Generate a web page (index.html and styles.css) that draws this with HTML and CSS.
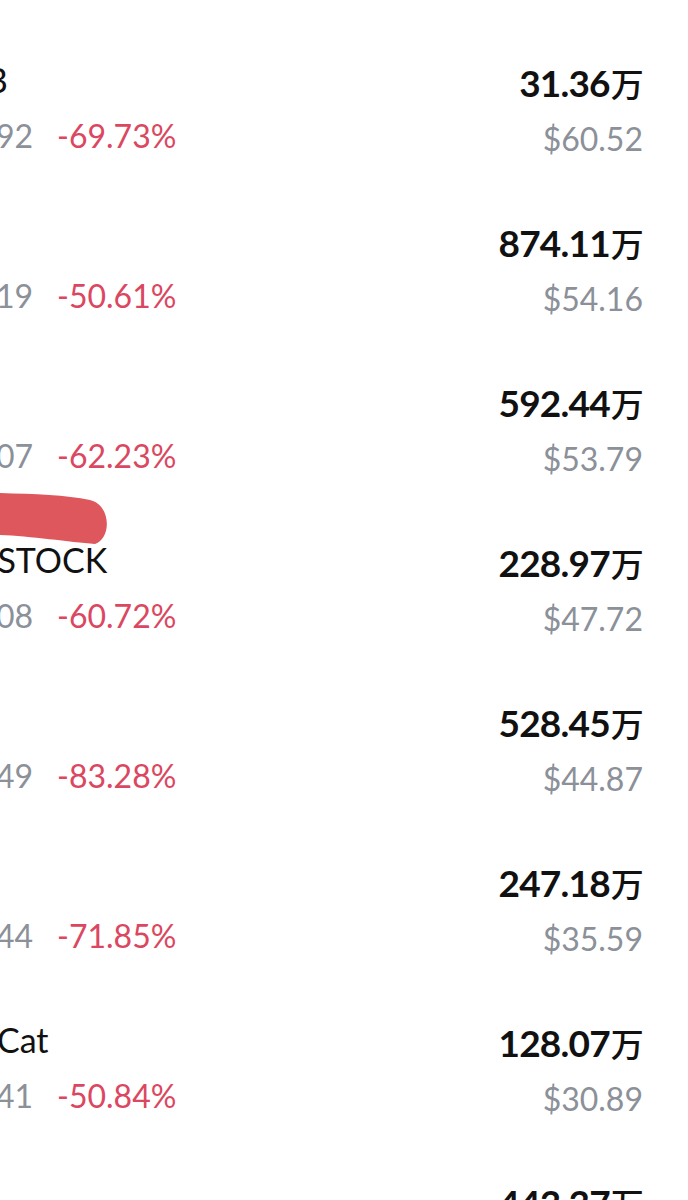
FILE: index.html
```html
<!DOCTYPE html>
<html lang="zh-CN">
<head>
    <meta charset="UTF-8">
    <meta name="viewport" content="width=device-width, initial-scale=1.0">
    <title>Token List</title>
    <link rel="stylesheet" href="styles.css">
</head>
<body>
    <div class="list">
        <div class="row">
            <div class="left">
                <div class="name">MOGUB</div>
                <div class="sub"><span class="price">$0.001992</span><span class="change">-69.73%</span></div>
            </div>
            <div class="right">
                <div class="value">31.36<span class="unit">万</span></div>
                <div class="usd">$60.52</div>
            </div>
        </div>

        <div class="row">
            <div class="left">
                <div class="name">ZEN</div>
                <div class="sub"><span class="price">$0.004519</span><span class="change">-50.61%</span></div>
            </div>
            <div class="right">
                <div class="value">874.11<span class="unit">万</span></div>
                <div class="usd">$54.16</div>
            </div>
        </div>

        <div class="row">
            <div class="left">
                <div class="name">KOI</div>
                <div class="sub"><span class="price">$0.002907</span><span class="change">-62.23%</span></div>
            </div>
            <div class="right">
                <div class="value">592.44<span class="unit">万</span></div>
                <div class="usd">$53.79</div>
            </div>
        </div>

        <div class="row">
            <div class="left">
                <div class="name">WOJAKSTOCK</div>
                <div class="sub"><span class="price">$0.001208</span><span class="change">-60.72%</span></div>
            </div>
            <div class="right">
                <div class="value">228.97<span class="unit">万</span></div>
                <div class="usd">$47.72</div>
            </div>
            <svg class="scribble" width="112" height="70" viewBox="0 0 112 70">
                <path d="M0 13 C35 14 66 15 90 20 C111 25 112 58 95 64 C70 62 30 56 0 55 Z" fill="#dd575c"/>
            </svg>
        </div>

        <div class="row">
            <div class="left">
                <div class="name">MEW</div>
                <div class="sub"><span class="price">$0.003349</span><span class="change">-83.28%</span></div>
            </div>
            <div class="right">
                <div class="value">528.45<span class="unit">万</span></div>
                <div class="usd">$44.87</div>
            </div>
        </div>

        <div class="row">
            <div class="left">
                <div class="name">DOG</div>
                <div class="sub"><span class="price">$0.007144</span><span class="change">-71.85%</span></div>
            </div>
            <div class="right">
                <div class="value">247.18<span class="unit">万</span></div>
                <div class="usd">$35.59</div>
            </div>
        </div>

        <div class="row">
            <div class="left">
                <div class="name">GrumpyCat</div>
                <div class="sub"><span class="price">$0.002241</span><span class="change">-50.84%</span></div>
            </div>
            <div class="right">
                <div class="value">128.07<span class="unit">万</span></div>
                <div class="usd">$30.89</div>
            </div>
        </div>

        <div class="row">
            <div class="left">
                <div class="name">PUPS</div>
                <div class="sub"><span class="price">$0.005512</span><span class="change">-58.10%</span></div>
            </div>
            <div class="right">
                <div class="value">443.37<span class="unit">万</span></div>
                <div class="usd">$28.40</div>
            </div>
        </div>
    </div>
</body>
</html>
```

FILE: styles.css
```css
body {
    margin: 0;
    width: 688px;
    height: 1200px;
    overflow: hidden;
    background: #fff;
    font-family: Lato, "Noto Sans CJK SC", sans-serif;
    color: #111;
}

.list {
    padding-top: 58px;
}

.row {
    position: relative;
    display: flex;
    justify-content: space-between;
    align-items: flex-start;
    height: 160px;
    padding-right: 45px;
}

.left {
    margin-left: -123px;
    white-space: nowrap;
}

.name {
    font-size: 34px;
    line-height: 44px;
}

.sub {
    font-size: 32px;
    line-height: 67px;
}

.price {
    color: #8b9099;
}

.change {
    color: #db4760;
    margin-left: 24px;
}

.right {
    text-align: right;
}

.value {
    font-size: 37px;
    font-weight: 700;
    line-height: 50px;
    letter-spacing: -0.8px;
}

.unit {
    font-family: "Noto Sans CJK SC", sans-serif;
    font-size: 33px;
    font-weight: 500;
    margin-left: 1px;
}

.usd {
    color: #8b9099;
    font-size: 32px;
    line-height: 61px;
}

.scribble {
    position: absolute;
    left: 0;
    top: -58px;
}
```
